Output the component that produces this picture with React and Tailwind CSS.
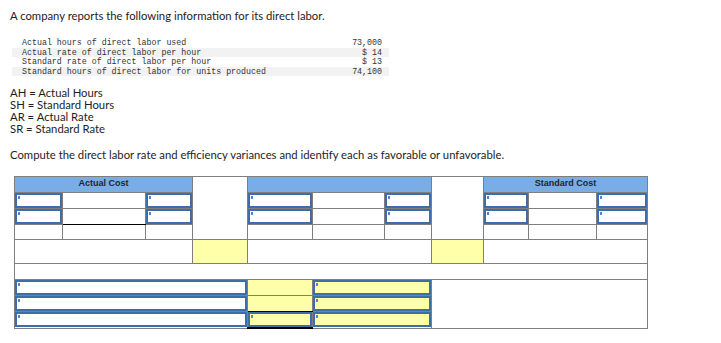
import React from 'react';

const data = [
  ['Actual hours of direct labor used', '73,000'],
  ['Actual rate of direct labor per hour', '$ 14'],
  ['Standard rate of direct labor per hour', '$ 13'],
  ['Standard hours of direct labor for units produced', '74,100'],
];

const legend = ['AH = Actual Hours', 'SH = Standard Hours', 'AR = Actual Rate', 'SR = Standard Rate'];

const cols = [48, 83, 47, 55, 65, 72, 47, 52, 45, 68, 51];

function Field({ yellow = false }) {
  return (
    <div
      className={`relative block w-full h-[15px] box-border border-2 border-[#3d6eab] ${yellow ? 'bg-[#ffffaa]' : 'bg-white'}`}
    >
      <span className="absolute left-[1px] top-[1px] w-[2px] h-[3px] bg-[#4a86d8]" />
    </div>
  );
}

const td = 'border border-[#7f7f7f] p-0 align-top';

export default function App() {
  return (
    <div className="w-[721px] h-[343px] bg-white pl-[10px] pt-[10px] text-[#1d1d1d] font-['Lato',sans-serif] overflow-hidden">
      <p className="text-[11.3px] leading-[12px]">A company reports the following information for its direct labor.</p>

      <div className="mt-[16px] w-[377px] ml-[2px] font-['Liberation_Mono',monospace] text-[8.3px] text-[#333]">
        {data.map(([label, value], i) => (
          <div
            key={label}
            className={`flex justify-between h-[9.5px] leading-[9.5px] pl-[10px] pr-[7px] ${i % 2 === 1 ? 'bg-[#f2f2f2]' : ''}`}
          >
            <span>{label}</span>
            <span>{value}</span>
          </div>
        ))}
      </div>

      <div className="mt-[11px] text-[11.3px] leading-[12px]">
        {legend.map((l) => (
          <p key={l}>{l}</p>
        ))}
      </div>

      <p className="mt-[14px] text-[11.3px] leading-[12px]">
        Compute the direct labor rate and efficiency variances and identify each as favorable or unfavorable.
      </p>

      <table className="mt-[15px] ml-[4px] table-fixed border-collapse w-[634px] font-['Liberation_Sans',sans-serif]">
        <colgroup>
          {cols.map((w, i) => (
            <col key={i} style={{ width: w }} />
          ))}
        </colgroup>
        <tbody>
          <tr className="h-[16px]">
            <td colSpan={3} className={`${td} align-middle bg-[#79ade5] text-center text-[9px] font-bold text-[#1f2430]`}>Actual Cost</td>
            <td rowSpan={4} className={td}></td>
            <td colSpan={3} className={`${td} bg-[#79ade5]`}></td>
            <td rowSpan={4} className={td}></td>
            <td colSpan={3} className={`${td} align-middle bg-[#79ade5] text-center text-[9px] font-bold text-[#1f2430]`}>Standard Cost</td>
          </tr>
          {[0, 1].map((r) => (
            <tr key={r} className="h-[16px]">
              <td className={td}><Field /></td>
              <td className={`${td} ${r === 1 ? 'border-b-[#000]' : ''}`}></td>
              <td className={td}><Field /></td>
              <td className={td}><Field /></td>
              <td className={td}></td>
              <td className={td}><Field /></td>
              <td className={td}><Field /></td>
              <td className={td}></td>
              <td className={td}><Field /></td>
            </tr>
          ))}
          <tr className="h-[15px]">
            <td className={td}></td>
            <td className={td}></td>
            <td className={td}></td>
            <td className={td}></td>
            <td className={td}></td>
            <td className={td}></td>
            <td className={td}></td>
            <td className={td}></td>
            <td className={td}></td>
          </tr>
          <tr className="h-[24px]">
            <td colSpan={3} className={td}></td>
            <td className={`${td} bg-[#ffffaa]`}></td>
            <td colSpan={3} className={td}></td>
            <td className={`${td} bg-[#ffffaa]`}></td>
            <td colSpan={3} className={td}></td>
          </tr>
          <tr className="h-[16px]">
            <td colSpan={11} className={td}></td>
          </tr>
          <tr className="h-[16px]">
            <td colSpan={4} className={td}><Field /></td>
            <td className={`${td} bg-[#ffffaa]`}></td>
            <td colSpan={2} className={td}><Field yellow /></td>
            <td colSpan={4} rowSpan={3} className={td}></td>
          </tr>
          <tr className="h-[16px]">
            <td colSpan={4} className={td}><Field /></td>
            <td className={`${td} bg-[#ffffaa] border-b-[#000]`}></td>
            <td colSpan={2} className={td}><Field yellow /></td>
          </tr>
          <tr className="h-[16px]">
            <td colSpan={4} className={td}><Field /></td>
            <td className={`${td} border-b-2 border-b-[#000]`}><Field yellow /></td>
            <td colSpan={2} className={td}><Field yellow /></td>
          </tr>
        </tbody>
      </table>
    </div>
  );
}
